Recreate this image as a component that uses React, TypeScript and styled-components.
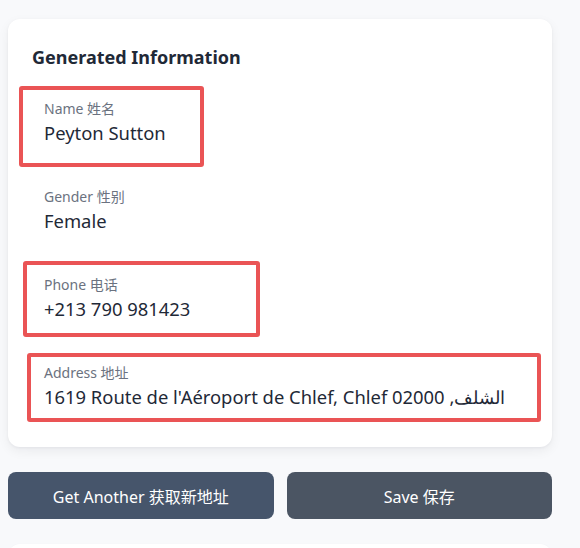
import React from "react";
import styled, { createGlobalStyle } from "styled-components";

const GlobalStyle = createGlobalStyle`
  html, body {
    margin: 0;
    padding: 0;
    background: #f8f9fb;
  }
  body {
    font-family: "Noto Sans", "Noto Sans CJK SC", sans-serif;
    color: #1f2937;
  }
`;

type Mark = { left: number; top: number; width: number; height: number };

type Item = { label: string; value: string; mark?: Mark };

const items: Item[] = [
  { label: "Name 姓名", value: "Peyton Sutton", mark: { left: -13, top: -1, width: 185, height: 81 } },
  { label: "Gender 性别", value: "Female" },
  { label: "Phone 电话", value: "+213 790 981423", mark: { left: -9, top: -2, width: 237, height: 76 } },
  {
    label: "Address 地址",
    value: "1619 Route de l'Aéroport de Chlef, Chlef 02000 ,الشلف",
    mark: { left: -5, top: 2, width: 514, height: 69 },
  },
];

const App = (): JSX.Element => {
  return (
    <Page>
      <GlobalStyle />
      <Card>
        <Title>Generated Information</Title>
        <Fields>
          {items.map((item) => (
            <Field key={item.label}>
              <Label>{item.label}</Label>
              <Value>{item.value}</Value>
              {item.mark && (
                <Highlight $left={item.mark.left} $top={item.mark.top} $width={item.mark.width} $height={item.mark.height} />
              )}
            </Field>
          ))}
        </Fields>
      </Card>
      <Actions>
        <Button $bg="#46556b">Get Another 获取新地址</Button>
        <Button $bg="#4b5563">Save 保存</Button>
      </Actions>
      <NextCard />
    </Page>
  );
};

export default App;

const Page = styled.div`
  width: 544px;
  padding: 19px 8px 0;
  height: 548px;
  overflow: hidden;
  box-sizing: content-box;
`;

const Card = styled.section`
  background: #fff;
  border-radius: 12px;
  padding: 24px;
  box-shadow: 0 4px 12px rgba(15, 23, 42, 0.06), 0 1px 3px rgba(15, 23, 42, 0.05);
`;

const Title = styled.h2`
  margin: 0 0 16px;
  font-size: 18px;
  line-height: 28px;
  font-weight: 700;
  color: #1f2937;
`;

const Fields = styled.div`
  display: flex;
  flex-direction: column;
  gap: 16px;
`;

const Field = styled.div`
  position: relative;
  padding: 12px;
`;

const Label = styled.div`
  font-size: 14px;
  line-height: 20px;
  color: #6b7280;
`;

const Value = styled.div`
  font-size: 18.4px;
  line-height: 28px;
  color: #1f2937;
  white-space: nowrap;
`;

const Highlight = styled.div<{ $left: number; $top: number; $width: number; $height: number }>`
  position: absolute;
  left: ${(p) => p.$left}px;
  top: ${(p) => p.$top}px;
  width: ${(p) => p.$width}px;
  height: ${(p) => p.$height}px;
  border: 4px solid #ea5455;
  border-radius: 3px;
  box-sizing: border-box;
  pointer-events: none;
`;

const Actions = styled.div`
  display: grid;
  grid-template-columns: 1fr 1fr;
  gap: 13px;
  margin-top: 25px;
`;

const Button = styled.button<{ $bg: string }>`
  height: 47px;
  border: none;
  border-radius: 8px;
  background: ${(p) => p.$bg};
  color: #fff;
  font-family: "Noto Sans", "Noto Sans CJK SC", sans-serif;
  font-size: 16px;
  font-weight: 400;
  cursor: pointer;
`;

const NextCard = styled.div`
  margin-top: 25px;
  height: 40px;
  background: #fff;
  border-radius: 12px;
  box-shadow: 0 1px 3px rgba(15, 23, 42, 0.05);
`;
